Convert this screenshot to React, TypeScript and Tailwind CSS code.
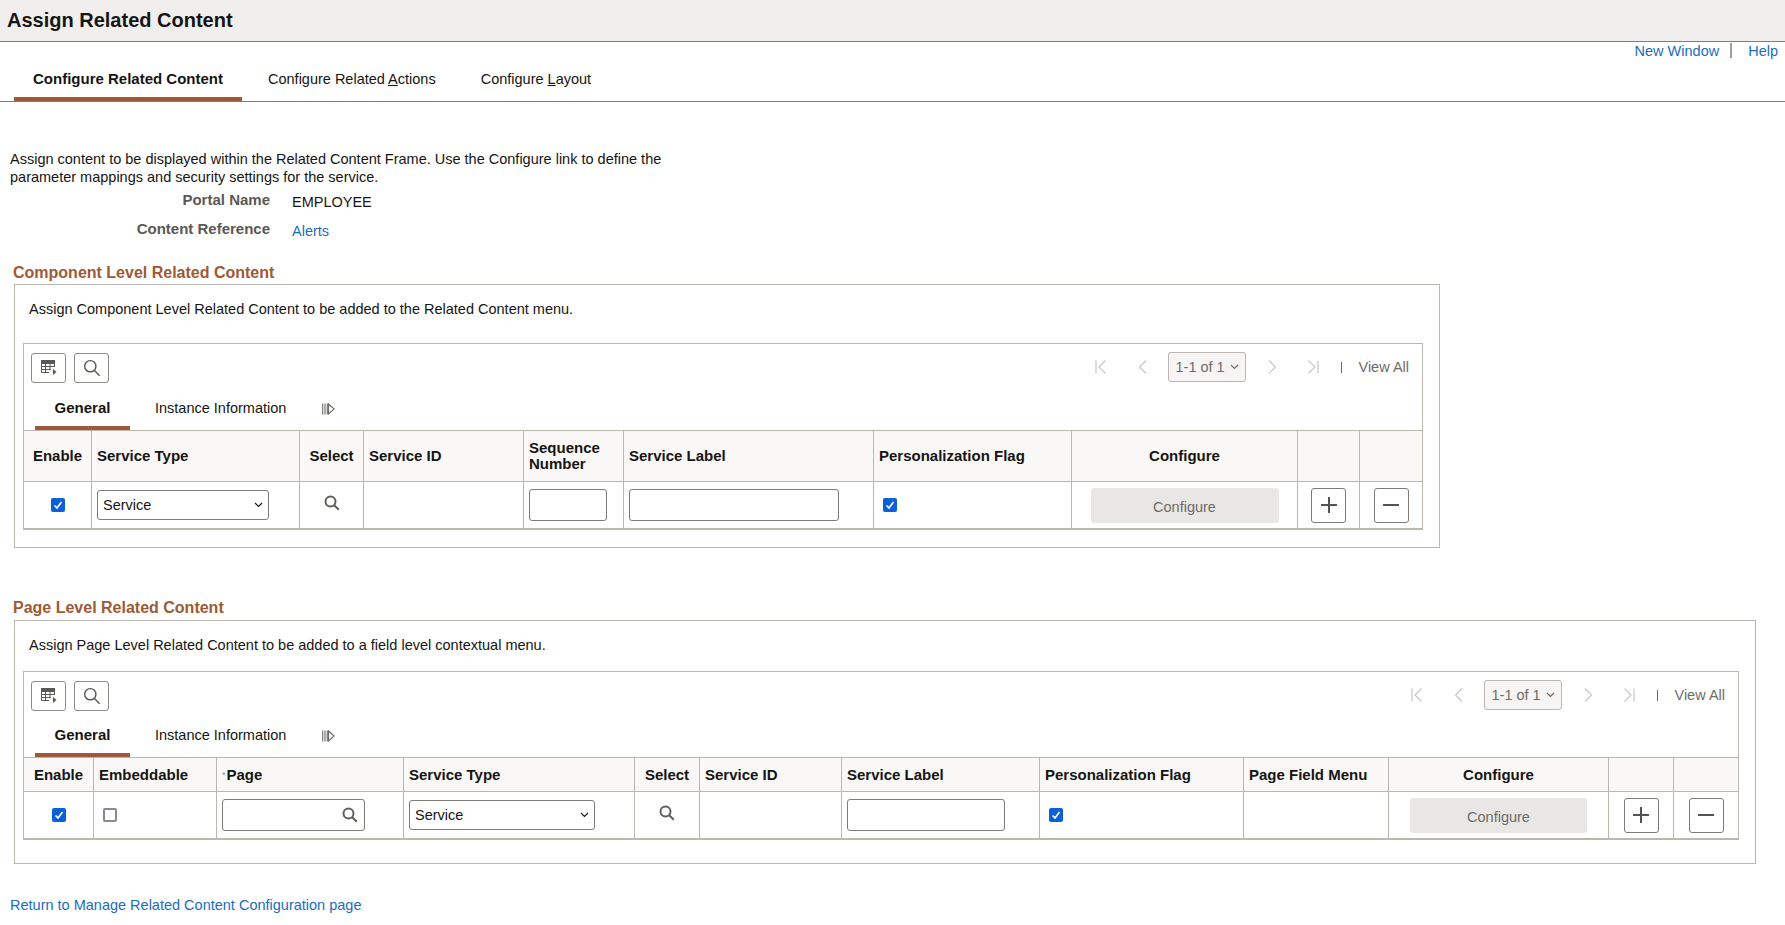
import type { ReactNode } from "react";

const FIRST_COLS = "grid-cols-[67px_208px_64px_160px_100px_250px_198px_226px_62px_63px]";
const SECOND_COLS = "grid-cols-[69px_123px_187px_231px_65px_142px_198px_204px_145px_220px_65px_65px]";

function Check() {
  return (
    <span className="flex h-[14px] w-[14px] items-center justify-center rounded-[2px] bg-[#0b5fd9]">
      <svg width="10" height="10" viewBox="0 0 10 10" fill="none" stroke="#fff" strokeWidth="1.7">
        <path d="M1.5 5.5 L4 8 L8.5 2" />
      </svg>
    </span>
  );
}

function SearchIcon({ size = 16, thin = false }: { size?: number; thin?: boolean }) {
  return (
    <svg width={size} height={size} viewBox="0 0 16 16" fill="none" stroke={thin ? "#56524f" : "#625e5b"} strokeWidth={thin ? 1.2 : 2}>
      <circle cx="6.5" cy="6.5" r="5" />
      <path d="M10.2 10.2 L14.8 14.8" />
    </svg>
  );
}

function GridIcon() {
  return (
    <svg width="16" height="16" viewBox="0 0 16 16" fill="none" stroke="#5c5855" strokeWidth="1">
      <rect x="0.5" y="0.5" width="13" height="3" fill="#5c5855" />
      <path d="M0.5 3.5V12.5H8M0.5 6.5H13.5M0.5 9.5H10M4.5 3.5V12.5M9 3.5V9.5M13.5 3.5V7" />
      <path d="M12 9 L15.5 12 L12 15 Z" fill="#5c5855" stroke="none" />
    </svg>
  );
}

function Pager() {
  const cls = "#c9c6c3";
  return (
    <div className="-mt-[1px] flex items-center">
      <svg width="12" height="14" viewBox="0 0 12 14" fill="none" stroke={cls} strokeWidth="1.2">
        <path d="M1 0.5V13.5M10.5 0.5L4 7L10.5 13.5" />
      </svg>
      <svg className="ml-[31px]" width="10" height="14" viewBox="0 0 10 14" fill="none" stroke={cls} strokeWidth="1.2">
        <path d="M8 0.5L1.5 7L8 13.5" />
      </svg>
      <div className="ml-[20px] flex h-[30px] w-[78px] items-center justify-between rounded-[3px] border border-[#bcb6b1] bg-[#f6f5f4] pb-[1px] pl-[6px] pr-[6px] text-[#6f6b68]">
        <span>1-1 of 1</span>
        <svg width="9" height="6" viewBox="0 0 9 6" fill="none" stroke="#6f6b68" strokeWidth="1.2">
          <path d="M1 1L4.5 4.5L8 1" />
        </svg>
      </div>
      <svg className="ml-[21px]" width="10" height="14" viewBox="0 0 10 14" fill="none" stroke={cls} strokeWidth="1.2">
        <path d="M2 0.5L8.5 7L2 13.5" />
      </svg>
      <svg className="ml-[30px]" width="12" height="14" viewBox="0 0 12 14" fill="none" stroke={cls} strokeWidth="1.2">
        <path d="M11 0.5V13.5M1.5 0.5L8 7L1.5 13.5" />
      </svg>
      <span className="ml-[22px] h-[11px] w-px bg-[#8c5a48]" />
      <span className="ml-[16px] pb-[1px] text-[#6f6b68]">View All</span>
    </div>
  );
}

function SquareButton({ children }: { children: ReactNode }) {
  return (
    <span className="flex h-[30px] w-[35px] items-center justify-center rounded-[3px] border border-[#8f8b87] bg-white">
      {children}
    </span>
  );
}

function Toolbar({ tabHeight }: { tabHeight: string }) {
  return (
    <>
      <div className="flex items-start justify-between pl-[7px] pr-[13px] pt-[9px]">
        <div className="flex gap-[8px]">
          <SquareButton>
            <GridIcon />
          </SquareButton>
          <SquareButton>
            <SearchIcon size={18} thin />
          </SquareButton>
        </div>
        <Pager />
      </div>
      <div className={`flex items-end pl-[11px] ${tabHeight}`}>
        <div className="flex h-full w-[95px] items-center justify-center border-b-4 border-[#a0583a] pt-[6px] text-[15px] font-bold text-[#161513]">
          General
        </div>
        <div className="ml-[25px] flex h-full items-center pt-[2px] text-[#161513]">Instance Information</div>
        <svg className="mb-[15px] ml-[36px]" width="13" height="12" viewBox="0 0 13 12" fill="none" stroke="#6f6b68" strokeWidth="1.1">
          <path d="M0.7 0.5V11.5M3 0.5V11.5M5.3 0.5V11.5" />
          <path d="M6.5 1 L12.2 6 L6.5 11 Z" />
        </svg>
      </div>
    </>
  );
}

function Head({ children, center = false, first = false }: { children?: ReactNode; center?: boolean; first?: boolean }) {
  return (
    <div
      className={`flex items-center bg-[#f9f8f6] px-[5px] text-[15px] font-bold leading-[16px] text-[#161513] ${first ? "" : "border-l border-[#bcb6b1]"} ${center ? "justify-center" : ""}`}
    >
      {children}
    </div>
  );
}

function Cell({ children, first = false, className = "" }: { children?: ReactNode; first?: boolean; className?: string }) {
  return <div className={`flex items-center border-t border-[#bcb6b1] ${first ? "" : "border-l"} ${className}`}>{children}</div>;
}

function SelectBox({ width }: { width: string }) {
  return (
    <div className={`flex h-[30px] items-center justify-between rounded-[3px] border border-[#7f7b78] bg-white pl-[5px] pr-[5px] text-[#161513] ${width}`}>
      <span>Service</span>
      <svg width="9" height="6" viewBox="0 0 9 6" fill="none" stroke="#161513" strokeWidth="1.2">
        <path d="M1 1L4.5 4.5L8 1" />
      </svg>
    </div>
  );
}

function TextBox({ width }: { width: string }) {
  return <div className={`h-[32px] rounded-[3px] border border-[#7f7b78] bg-white ${width}`} />;
}

function ConfigureButton({ width }: { width: string }) {
  return (
    <div className={`flex h-[35px] items-center justify-center rounded-[3px] bg-[#e8e7e5] pt-[4px] text-[#6f6b68] ${width}`}>Configure</div>
  );
}

function AddRemove({ kind }: { kind: "add" | "remove" }) {
  return (
    <span className="flex h-[35px] w-[35px] items-center justify-center rounded-[3px] border border-[#7f7b78] bg-white">
      <svg width="18" height="18" viewBox="0 0 18 18" fill="none" stroke="#56524f" strokeWidth="2">
        <path d="M1 9H17" />
        {kind === "add" && <path d="M9 1V17" />}
      </svg>
    </span>
  );
}

export default function App() {
  return (
    <div className="min-h-[925px] bg-white text-[14.5px] leading-[18px] text-[#161513] [font-family:'Liberation_Sans',Arial,sans-serif]">
      <div className="flex h-[42px] items-center border-b border-[#7f7b78] bg-[#f1efed] pb-[2px] pl-[7px] text-[20px] font-bold">
        Assign Related Content
      </div>

      <div className="flex h-[18px] items-center justify-end pb-[1px] pr-[7px] text-[#1a6dc0]">
        <span>New Window</span>
        <span className="ml-[11px] h-[15px] w-[2px] bg-[#a09c98]" />
        <span className="ml-[16px]">Help</span>
      </div>

      <div className="flex h-[42px] border-b border-[#7f7b78] pl-[14px]">
        <div className="flex h-[41px] w-[228px] items-center justify-center border-b-4 border-[#a0583a] pt-[1px] text-[15px] font-bold">
          Configure Related Content
        </div>
        <div className="ml-[26px] flex h-[41px] items-center pb-[3px]">
          <span>
            Configure Related <u>A</u>ctions
          </span>
        </div>
        <div className="ml-[45px] flex h-[41px] items-center pb-[3px]">
          <span>
            Configure <u>L</u>ayout
          </span>
        </div>
      </div>

      <div className="w-[680px] pl-[10px] pt-[48px]">
        Assign content to be displayed within the Related Content Frame. Use the Configure link to define the parameter mappings and
        security settings for the service.
      </div>

      <div className="mt-[5px] grid grid-cols-[270px_1fr] gap-x-[22px] gap-y-[9px]">
        <div className="text-right text-[15px] font-bold text-[#5c5855]">Portal Name</div>
        <div className="mt-[2px]">EMPLOYEE</div>
        <div className="text-right text-[15px] font-bold text-[#5c5855]">Content Reference</div>
        <div className="mt-[2px] text-[#1a6dc0]">Alerts</div>
      </div>

      <div className="ml-[13px] mt-[23px] text-[16px] font-bold leading-[20px] text-[#9e5a34]">Component Level Related Content</div>
      <div className="ml-[14px] mt-[1px] h-[264px] w-[1426px] border border-[#bcb6b1] px-[8px] pt-[15px]">
        <div className="h-[43px] pl-[6px]">Assign Component Level Related Content to be added to the Related Content menu.</div>
        <div className="w-[1400px] border border-b-0 border-[#bcb6b1]">
          <Toolbar tabHeight="h-[47px]" />
          <div className={`grid border-b-2 border-t border-[#bcb6b1] ${FIRST_COLS} grid-rows-[50px_47px]`}>
            <Head first center>
              Enable
            </Head>
            <Head>Service Type</Head>
            <Head center>Select</Head>
            <Head>Service ID</Head>
            <Head>
              Sequence
              <br />
              Number
            </Head>
            <Head>Service Label</Head>
            <Head>Personalization Flag</Head>
            <Head center>Configure</Head>
            <Head />
            <Head />

            <Cell first className="justify-center">
              <Check />
            </Cell>
            <Cell className="pl-[5px]">
              <SelectBox width="w-[172px]" />
            </Cell>
            <Cell className="justify-center pb-[4px]">
              <SearchIcon />
            </Cell>
            <Cell />
            <Cell className="pl-[5px]">
              <TextBox width="w-[78px]" />
            </Cell>
            <Cell className="pl-[5px]">
              <TextBox width="w-[210px]" />
            </Cell>
            <Cell className="pl-[9px]">
              <Check />
            </Cell>
            <Cell className="justify-center">
              <ConfigureButton width="w-[188px]" />
            </Cell>
            <Cell className="justify-center">
              <AddRemove kind="add" />
            </Cell>
            <Cell className="justify-center">
              <AddRemove kind="remove" />
            </Cell>
          </div>
        </div>
      </div>

      <div className="ml-[13px] mt-[50px] text-[16px] font-bold leading-[20px] text-[#9e5a34]">Page Level Related Content</div>
      <div className="ml-[14px] mt-[2px] h-[244px] w-[1742px] border border-[#bcb6b1] px-[8px] pt-[15px]">
        <div className="h-[35px] pl-[6px]">Assign Page Level Related Content to be added to a field level contextual menu.</div>
        <div className="w-[1716px] border border-b-0 border-[#bcb6b1]">
          <Toolbar tabHeight="h-[46px]" />
          <div className={`grid border-b-2 border-t border-[#bcb6b1] ${SECOND_COLS} grid-rows-[33px_47px]`}>
            <Head first center>
              Enable
            </Head>
            <Head>Embeddable</Head>
            <Head>
              <span className="mr-px text-[9px] font-normal text-[#6f8fc0]">*</span>Page
            </Head>
            <Head>Service Type</Head>
            <Head center>Select</Head>
            <Head>Service ID</Head>
            <Head>Service Label</Head>
            <Head>Personalization Flag</Head>
            <Head>Page Field Menu</Head>
            <Head center>Configure</Head>
            <Head />
            <Head />

            <Cell first className="justify-center">
              <Check />
            </Cell>
            <Cell className="pl-[9px]">
              <span className="h-[14px] w-[14px] rounded-[2px] border-2 border-[#8a84a0] bg-white" />
            </Cell>
            <Cell className="pl-[5px]">
              <div className="flex h-[32px] w-[143px] items-center justify-end rounded-[3px] border border-[#7f7b78] bg-white pr-[6px]">
                <SearchIcon />
              </div>
            </Cell>
            <Cell className="pl-[5px]">
              <SelectBox width="w-[186px]" />
            </Cell>
            <Cell className="justify-center pb-[4px]">
              <SearchIcon />
            </Cell>
            <Cell />
            <Cell className="pl-[5px]">
              <TextBox width="w-[158px]" />
            </Cell>
            <Cell className="pl-[9px]">
              <Check />
            </Cell>
            <Cell />
            <Cell className="justify-center">
              <ConfigureButton width="w-[177px]" />
            </Cell>
            <Cell className="justify-center">
              <AddRemove kind="add" />
            </Cell>
            <Cell className="justify-center">
              <AddRemove kind="remove" />
            </Cell>
          </div>
        </div>
      </div>

      <div className="mt-[32px] pl-[10px] text-[#1a6dc0]">Return to Manage Related Content Configuration page</div>
    </div>
  );
}
